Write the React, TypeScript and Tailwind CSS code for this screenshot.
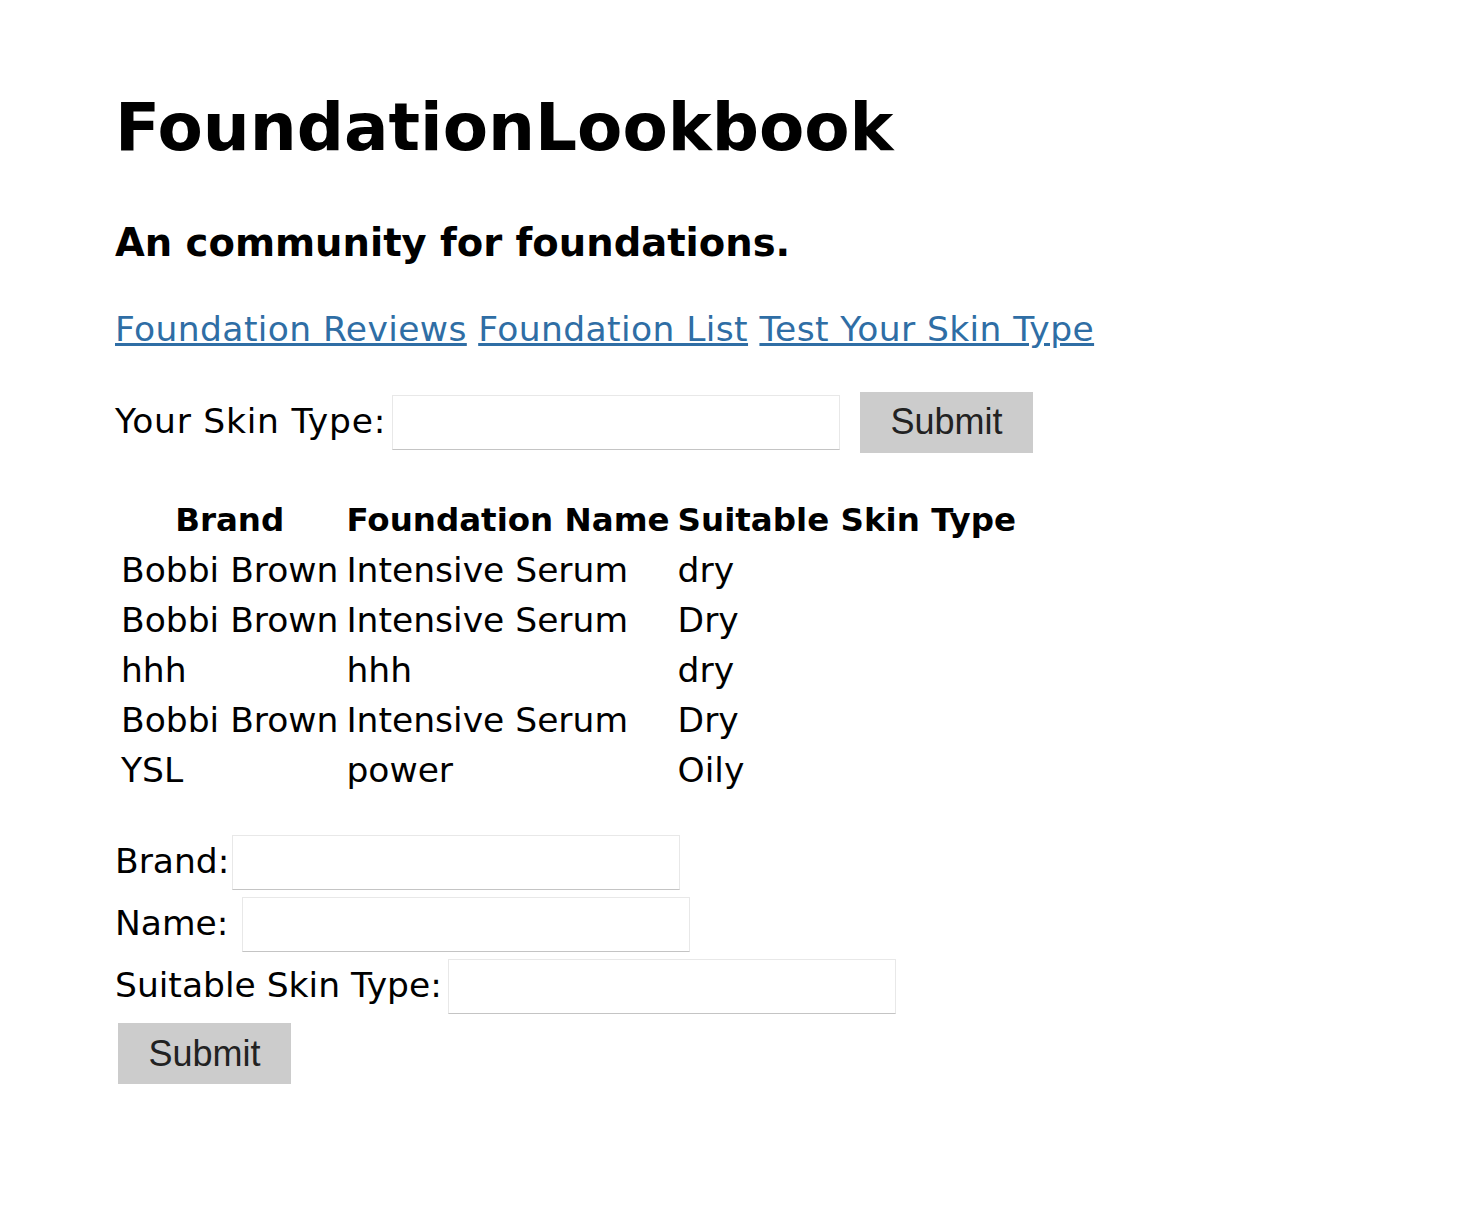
import React from "react";

const rows = [
  ["Bobbi Brown", "Intensive Serum", "dry"],
  ["Bobbi Brown", "Intensive Serum", "Dry"],
  ["hhh", "hhh", "dry"],
  ["Bobbi Brown", "Intensive Serum", "Dry"],
  ["YSL", "power", "Oily"],
];

function TextInput({ className = "" }: { className?: string }) {
  return (
    <input
      type="text"
      className={`h-[55px] w-[448px] border border-[#e8e8e8] border-b-[#c4c4c4] bg-white outline-none ${className}`}
    />
  );
}

function SubmitButton({ className = "" }: { className?: string }) {
  return (
    <button
      type="button"
      className={`h-[61px] w-[173px] bg-[#cccccc] text-[36px] text-[#222] font-['Liberation_Sans',Arial,sans-serif] ${className}`}
    >
      Submit
    </button>
  );
}

export default function App() {
  return (
    <main className="min-h-screen bg-white pl-[115px] text-black font-['DejaVu_Sans',sans-serif] text-[34.5px]">
      <h1 className="pt-[88px] h-[168px] flex items-end">
        <span className="h-[80px] flex items-center text-[66px] font-bold leading-[80px]">
          FoundationLookbook
        </span>
      </h1>
      <h3 className="mt-[50px] h-[50px] flex items-center text-[38.5px] font-bold">
        An community for foundations.
      </h3>

      <nav className="mt-[40px] h-[44px] flex items-center text-[#2f6ea5] tracking-[0.4px]">
        <a href="#" className="underline">Foundation Reviews</a>
        <span>&nbsp;</span>
        <a href="#" className="underline">Foundation List</a>
        <span>&nbsp;</span>
        <a href="#" className="underline">Test Your Skin Type</a>
      </nav>

      <form className="mt-[39px] h-[62px] flex items-center">
        <label className="tracking-[0.75px]">Your Skin Type:</label>
        <TextInput className="ml-[6px]" />
        <SubmitButton className="ml-[20px]" />
      </form>

      <table className="mt-[40px] border-separate border-spacing-[4px] leading-[42px]">
        <thead>
          <tr className="h-[46px]">
            <th className="px-[2px] text-[32.5px] font-bold text-center">Brand</th>
            <th className="px-[2px] text-[32.5px] font-bold text-center">Foundation Name</th>
            <th className="px-[2px] text-[32.5px] font-bold text-center">Suitable Skin Type</th>
          </tr>
        </thead>
        <tbody>
          {rows.map((r, i) => (
            <tr key={i} className="h-[46px]">
              {r.map((c, j) => (
                <td key={j} className="px-[2px] text-left whitespace-nowrap">
                  {c}
                </td>
              ))}
            </tr>
          ))}
        </tbody>
      </table>

      <form className="mt-[34px]">
        <div className="h-[62px] flex items-center">
          <label>Brand:</label>
          <TextInput className="ml-[3px]" />
        </div>
        <div className="h-[62px] flex items-center">
          <label>Name:</label>
          <TextInput className="ml-[14px]" />
        </div>
        <div className="h-[62px] flex items-center">
          <label>Suitable Skin Type:</label>
          <TextInput className="ml-[6px]" />
        </div>
        <SubmitButton className="mt-[6px] ml-[3px]" />
      </form>
    </main>
  );
}
